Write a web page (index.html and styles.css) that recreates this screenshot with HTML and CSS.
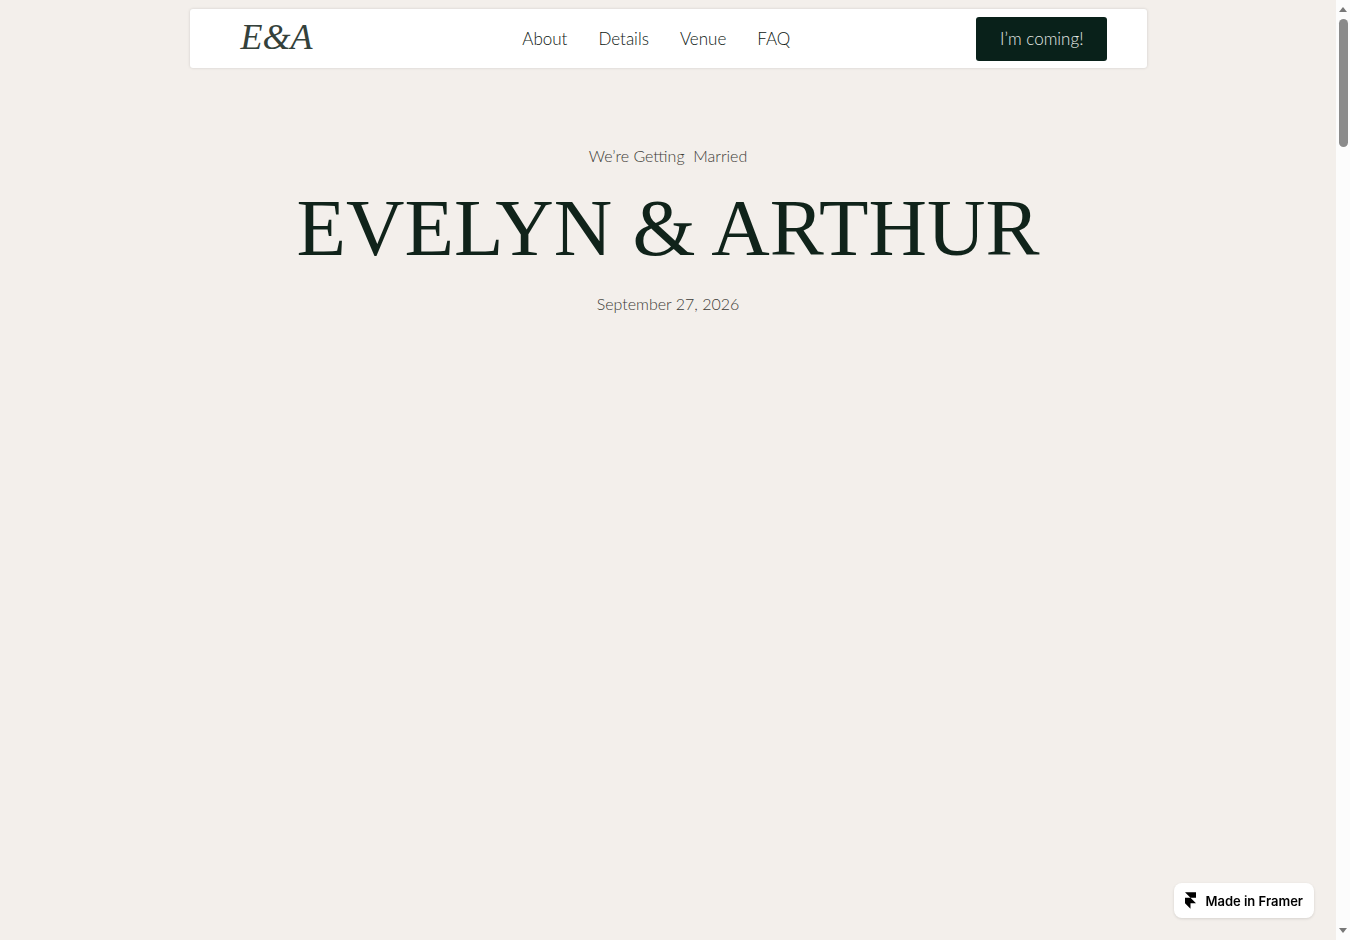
FILE: index.html
```html
<!DOCTYPE html>
<html lang="en">
<head>
<meta charset="utf-8">
<meta name="viewport" content="width=device-width, initial-scale=1">
<title>Evelyn &amp; Arthur</title>
<link rel="stylesheet" href="styles.css">
</head>
<body>
<div class="page">
  <header class="navbar">
    <a class="logo" href="#top">E&amp;A</a>
    <nav class="links" aria-label="Main">
      <a href="#about">About</a>
      <a href="#details">Details</a>
      <a href="#venue">Venue</a>
      <a href="#faq">FAQ</a>
    </nav>
    <button class="rsvp" type="button">I’m coming!</button>
  </header>
  <main class="hero" id="top">
    <p class="note">We’re Getting&nbsp; Married</p>
    <h1 class="names">EVELYN &amp; ARTHUR</h1>
    <p class="note">September 27, 2026</p>
  </main>
  <a class="badge" href="#framer">
    <svg class="badge-icon" viewBox="0 0 12 18" aria-hidden="true"><path d="M0 0h12v6H6zM0 6h6l6 6H6v6l-6-6z"/></svg>
    <span>Made in Framer</span>
  </a>
</div>
<div class="rail" aria-hidden="true">
  <svg class="arrow" viewBox="0 0 8 5"><path d="M4 0l4 5H0z"/></svg>
  <div class="thumb"></div>
  <svg class="arrow arrow-down" viewBox="0 0 8 5"><path d="M0 0h8L4 5z"/></svg>
</div>
</body>
</html>
```
FILE: styles.css
```css
* {
  box-sizing: border-box;
}

body {
  margin: 0;
  min-height: 100vh;
  display: grid;
  grid-template-columns: 1fr 14px;
  background: #f3efeb;
  color: #10231a;
  font-family: Lato, "Open Sans", sans-serif;
}

.page {
  padding: 9px 24px;
}

.navbar {
  display: flex;
  justify-content: space-between;
  align-items: center;
  max-width: 957px;
  min-height: 59px;
  margin: 0 auto;
  padding: 0 39px 0 51px;
  background: #fff;
  border-radius: 3px;
  box-shadow: 0 0 3px rgba(0, 0, 0, 0.15);
}

.logo {
  min-width: 96px;
  padding-bottom: 4px;
  color: #34413b;
  font: italic 36px/40px "Liberation Serif", serif;
  text-decoration: none;
}

.links {
  display: flex;
  gap: 31px;
}

.links a {
  color: #0c1611;
  font-size: 17px;
  font-weight: 300;
  line-height: 24px;
  text-decoration: none;
}

.rsvp {
  height: 44px;
  padding: 0 24px;
  border: 0;
  border-radius: 3px;
  background: #09211a;
  color: #e4e8e5;
  font: 300 17px/24px Lato, "Open Sans", sans-serif;
}

.hero {
  padding-top: 76px;
  text-align: center;
}

.note {
  margin: 0;
  color: #3c3b36;
  font-size: 16px;
  font-weight: 300;
  line-height: 24px;
}

.names {
  margin: 12px 0 16px;
  font: 400 81px/96px "Liberation Serif", serif;
}

.badge {
  position: fixed;
  right: 36px;
  bottom: 22px;
  display: flex;
  align-items: center;
  gap: 9px;
  height: 35px;
  padding: 0 11px;
  border-radius: 8px;
  background: #fff;
  box-shadow: 0 1px 3px rgba(0, 0, 0, 0.12);
  color: #000;
  font: 600 13px/20px Inter, sans-serif;
  text-decoration: none;
}

.badge-icon {
  width: 11px;
  height: 17px;
}

.rail {
  display: flex;
  flex-direction: column;
  align-items: center;
  padding: 7px 0;
  background: #fcfcfc;
}

.arrow {
  width: 8px;
  height: 5px;
  fill: #777;
}

.arrow-down {
  margin-top: auto;
}

.thumb {
  width: 9px;
  height: 128px;
  margin-top: 7px;
  border-radius: 5px;
  background: #8b8b8b;
}
```
